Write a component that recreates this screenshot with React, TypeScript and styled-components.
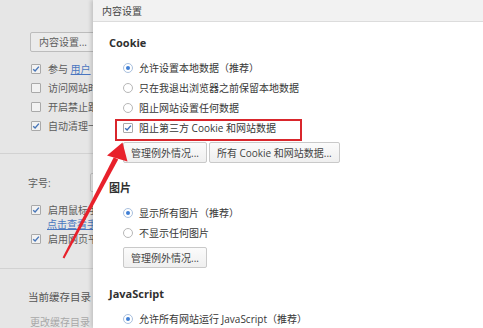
import React from 'react';
import styled, { createGlobalStyle } from 'styled-components';

const Global = createGlobalStyle`
  html, body { margin: 0; padding: 0; }
  body {
    width: 483px; height: 328px; overflow: hidden; background: #e6e6e6;
    font-family: "Open Sans", "Noto Sans CJK SC", sans-serif;
  }
`;

const Page = styled.div`
  position: relative;
  width: 483px;
  height: 328px;
  overflow: hidden;
  background: #e6e6e6;
  color: #5c5c5c;
  font-size: 10px;
  line-height: 12px;
`;

/* ---------- background settings page (the dialog covers most of it) ---------- */
const BgPanel = styled.div`
  padding-top: 32px;
  white-space: nowrap;
`;

const BgButton = styled.div`
  margin-left: 30px;
  width: 66px;
  height: 20px;
  box-sizing: border-box;
  border: 1px solid #bcbcbc;
  border-radius: 2px;
  background: #ebebeb;
  display: flex;
  align-items: center;
  padding-left: 8px;
  color: #5c5c5c;
`;

const BgList = styled.div<{ $top: number }>`
  margin-top: ${(p) => p.$top}px;
  padding-left: 31px;
  display: flex;
  flex-direction: column;
`;

const BgRow = styled.div<{ $h?: number }>`
  height: ${(p) => p.$h ?? 19}px;
  display: flex;
  align-items: center;
  gap: 7px;
`;

const BgBox = styled.span`
  width: 10px;
  height: 10px;
  box-sizing: border-box;
  border: 1px solid #a9a9a9;
  background: #f2f2f2;
  border-radius: 1px;
  display: flex;
  align-items: center;
  justify-content: center;
  flex: none;
`;

const Link = styled.span`
  color: #4a76c0;
  text-decoration: underline;
`;

const BgLinkLine = styled.div`
  line-height: 12px;
  height: 12px;
  padding-left: 16px;
  margin-bottom: 1px;
`;

const Separator = styled.div<{ $top: number }>`
  margin-top: ${(p) => p.$top}px;
  height: 1px;
  background: #d2d2d2;
`;

const FontRow = styled.div`
  margin-top: 19px;
  height: 19px;
  display: flex;
  align-items: center;
  padding-left: 28px;
`;

const FontLabel = styled.span`
  width: 62px;
  flex: none;
`;

const SelectBox = styled.span`
  width: 100px;
  flex: none;
  height: 19px;
  box-sizing: border-box;
  border: 1px solid #c3c3c3;
  border-radius: 2px;
  background: #ececec;
`;

const CacheLabel = styled.div`
  margin-top: 20px;
  line-height: 16px;
  padding-left: 28px;
  font-size: 10.5px;
  color: #555;
`;

const CacheLink = styled.div`
  margin-top: 9px;
  line-height: 16px;
  padding-left: 30px;
  color: #a8a8a8;
`;

/* ---------- dialog ---------- */
const Dialog = styled.div`
  position: absolute;
  left: 93px;
  top: 0;
  right: -20px;
  bottom: 0;
  background: #ffffff;
  box-shadow: -2px 0 4px rgba(0, 0, 0, 0.16);
  color: #363636;
`;

const DialogHeader = styled.div`
  height: 22px;
  box-sizing: border-box;
  background: #f2f2f2;
  border-bottom: 1px solid #dcdcdc;
  display: flex;
  align-items: center;
  padding-left: 9px;
  color: #444;
  font-size: 10px;
`;

const DialogBody = styled.div`
  padding-left: 16px;
`;

const Heading = styled.div<{ $top: number }>`
  margin-top: ${(p) => p.$top}px;
  height: 16px;
  line-height: 16px;
  font-size: 11px;
  font-weight: 700;
  color: #303030;
`;

const Options = styled.div`
  margin-top: 7px;
  margin-left: 14px;
  display: flex;
  flex-direction: column;
`;

const OptionRow = styled.div<{ $highlight?: boolean }>`
  position: relative;
  height: 20px;
  display: flex;
  align-items: center;
  gap: 6px;
  white-space: nowrap;
  ${(p) =>
    p.$highlight &&
    `
    &::after {
      content: '';
      position: absolute;
      left: -8px;
      top: 1px;
      width: 187px;
      height: 22px;
      box-sizing: border-box;
      border: 2px solid #d9262c;
    }
  `}
`;

const Radio = styled.span<{ $checked?: boolean }>`
  width: 10px;
  height: 10px;
  box-sizing: border-box;
  border-radius: 50%;
  border: 1px solid ${(p) => (p.$checked ? '#a9c0de' : '#b7b7b7')};
  background: #fff;
  display: flex;
  align-items: center;
  justify-content: center;
  flex: none;
  &::after {
    content: '';
    display: ${(p) => (p.$checked ? 'block' : 'none')};
    width: 4px;
    height: 4px;
    border-radius: 50%;
    background: #3f7fd5;
  }
`;

const CheckBox = styled.span`
  width: 10px;
  height: 10px;
  box-sizing: border-box;
  border: 1px solid #a9a9a9;
  background: #fff;
  border-radius: 1px;
  display: flex;
  align-items: center;
  justify-content: center;
  flex: none;
`;

const Buttons = styled.div`
  margin-top: 4px;
  margin-left: 14px;
  display: flex;
  gap: 2px;
`;

const Button = styled.div`
  height: 21px;
  box-sizing: border-box;
  padding: 0 7px;
  border: 1px solid #c9c9c9;
  border-radius: 2px;
  background: linear-gradient(#fbfbfb, #efefef);
  display: flex;
  align-items: center;
  color: #444;
  white-space: nowrap;
`;

const ArrowLayer = styled.svg`
  position: absolute;
  left: 0;
  top: 0;
  pointer-events: none;
`;

const Check = ({ color = '#3b6fb8' }: { color?: string }) => (
  <svg width="8" height="8" viewBox="0 0 8 8">
    <path d="M1.2 4.2 L3.1 6 L6.9 1.6" fill="none" stroke={color} strokeWidth="1.4" />
  </svg>
);

const BgCheck = ({ checked, children }: { checked?: boolean; children: React.ReactNode }) => (
  <BgRow>
    <BgBox>{checked && <Check color="#4876b8" />}</BgBox>
    <span>{children}</span>
  </BgRow>
);

const RadioOption = ({ checked, children }: { checked?: boolean; children: React.ReactNode }) => (
  <OptionRow>
    <Radio $checked={checked} />
    <span>{children}</span>
  </OptionRow>
);

export default function App() {
  return (
    <Page>
      <Global />
      <BgPanel>
        <BgButton>内容设置...</BgButton>
        <BgList $top={7}>
          <BgCheck checked>
            参与 <Link>用户</Link>
          </BgCheck>
          <BgCheck>访问网站时</BgCheck>
          <BgCheck>开启禁止跟</BgCheck>
          <BgCheck checked>自动清理一</BgCheck>
        </BgList>
        <Separator $top={18} />
        <FontRow>
          <FontLabel>字号:</FontLabel>
          <SelectBox />
        </FontRow>
        <BgList $top={10}>
          <BgRow $h={16}>
            <BgBox>
              <Check color="#4876b8" />
            </BgBox>
            <span>启用鼠标手</span>
          </BgRow>
          <BgLinkLine>
            <Link>点击查看手</Link>
          </BgLinkLine>
          <BgRow $h={16}>
            <BgBox>
              <Check color="#4876b8" />
            </BgBox>
            <span>启用网页平</span>
          </BgRow>
        </BgList>
        <Separator $top={21} />
        <CacheLabel>当前缓存目录</CacheLabel>
        <CacheLink>更改缓存目录</CacheLink>
      </BgPanel>

      <Dialog>
        <DialogHeader>内容设置</DialogHeader>
        <DialogBody>
          <Heading $top={13}>Cookie</Heading>
          <Options>
            <RadioOption checked>允许设置本地数据（推荐）</RadioOption>
            <RadioOption>只在我退出浏览器之前保留本地数据</RadioOption>
            <RadioOption>阻止网站设置任何数据</RadioOption>
            <OptionRow $highlight>
              <CheckBox>
                <Check />
              </CheckBox>
              <span>阻止第三方 Cookie 和网站数据</span>
            </OptionRow>
          </Options>
          <Buttons>
            <Button>管理例外情况...</Button>
            <Button>所有 Cookie 和网站数据...</Button>
          </Buttons>

          <Heading $top={17}>图片</Heading>
          <Options>
            <RadioOption checked>显示所有图片（推荐）</RadioOption>
            <RadioOption>不显示任何图片</RadioOption>
          </Options>
          <Buttons>
            <Button>管理例外情况...</Button>
          </Buttons>

          <Heading $top={18}>JavaScript</Heading>
          <Options>
            <RadioOption checked>允许所有网站运行 JavaScript（推荐）</RadioOption>
          </Options>
        </DialogBody>
      </Dialog>

      <ArrowLayer width="483" height="328" viewBox="0 0 483 328">
        <path d="M62.6 257.6 L64.4 258.4 L118.2 159.6 L113.8 157.2 Z" fill="#e8212b" />
        <path d="M122.5 142.5 L107 155.5 L127.5 161.5 Z" fill="#e8212b" />
      </ArrowLayer>
    </Page>
  );
}
